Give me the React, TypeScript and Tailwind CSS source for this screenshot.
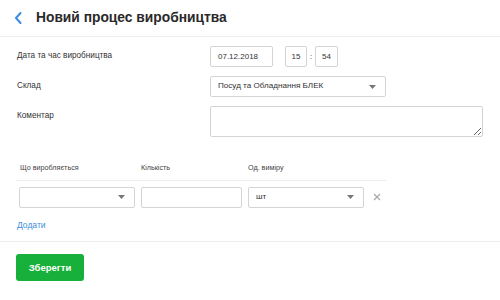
import React from 'react';

const font = { fontFamily: '"Liberation Sans", Arial, sans-serif' };

function Caret(): JSX.Element {
  return (
    <svg width="7" height="4" viewBox="0 0 7 4" className="shrink-0">
      <path d="M0 0h7L3.5 4z" fill="#777" />
    </svg>
  );
}

function SelectBox({ value, className }: { value?: string; className: string }): JSX.Element {
  return (
    <div
      className={`flex h-[21px] items-center justify-between rounded-[2px] border border-[#d4d4d4] bg-white pl-[7px] pr-[9px] text-[8.1px] text-[#333] ${className}`}
    >
      <span>{value ?? ''}</span>
      <Caret />
    </div>
  );
}

export default function App(): JSX.Element {
  return (
    <div className="h-[300px] w-[500px] overflow-hidden bg-white text-[#333]" style={font}>
      {/* Header */}
      <div className="flex h-[37px] items-center border-b border-[#ececec] pl-[14px]">
        <svg width="8" height="12" viewBox="0 0 8 12">
          <path d="M6.5 1L2 6l4.5 5" fill="none" stroke="#3b8de0" strokeWidth="2" strokeLinecap="round" strokeLinejoin="round" />
        </svg>
        <h1 className="ml-[14px] text-[13.8px] font-bold text-[#2a2a2a]">Новий процес виробництва</h1>
      </div>

      {/* Form rows */}
      <div className="flex flex-col gap-[9px] pl-[17px] pt-[9px]">
        <div className="flex">
          <div className="flex h-[21px] w-[193px] items-center text-[8.2px]">Дата та час виробництва</div>
          <div className="flex items-center">
            <div className="flex h-[21px] w-[63px] items-center rounded-[2px] border border-[#d4d4d4] px-[7px] text-[8px]">07.12.2018</div>
            <div className="ml-[12px] flex h-[21px] w-[22px] items-center justify-center rounded-[2px] border border-[#d4d4d4] text-[8px]">15</div>
            <span className="w-[8px] text-center text-[8px]">:</span>
            <div className="flex h-[21px] w-[23px] items-center justify-center rounded-[2px] border border-[#d4d4d4] text-[8px]">54</div>
          </div>
        </div>
        <div className="flex">
          <div className="flex h-[21px] w-[193px] items-center text-[8.2px]">Склад</div>
          <SelectBox value="Посуд та Обладнання БЛЕК" className="w-[176px]" />
        </div>
        <div className="flex">
          <div className="flex h-[21px] w-[193px] items-center text-[8.2px]">Коментар</div>
          <textarea className="h-[31px] w-[273px] rounded-[2px] border border-[#d4d4d4] outline-none" />
        </div>
      </div>

      {/* Items table */}
      <div className="ml-[16px] mt-[26px] w-[370px]">
        <div className="grid grid-cols-[122px_107px_122px_19px] border-b border-[#ececec] pb-[6px] text-[7.2px] text-[#444]">
          <div className="px-[4px]">Що виробляється</div>
          <div className="px-[3px]">Кількість</div>
          <div className="px-[3px]">Од. виміру</div>
          <div />
        </div>
        <div className="grid grid-cols-[122px_107px_122px_19px] items-center pt-[6px]">
          <div className="px-[3px]">
            <SelectBox className="w-[116px]" />
          </div>
          <div className="px-[3px]">
            <div className="h-[21px] w-[101px] rounded-[2px] border border-[#d4d4d4]" />
          </div>
          <div className="px-[3px]">
            <SelectBox value="шт" className="w-[116px]" />
          </div>
          <div className="flex justify-center">
            <svg width="8" height="8" viewBox="0 0 8 8">
              <path d="M1 1l6 6M7 1L1 7" stroke="#aaa" strokeWidth="1.3" />
            </svg>
          </div>
        </div>
      </div>

      <div className="pl-[17px] pt-[11px] text-[8.5px] text-[#3b8fd9]">Додати</div>

      {/* Footer */}
      <div className="mt-[9px] border-t border-[#ececec] pl-[16px] pt-[12px]">
        <button className="h-[27px] w-[68px] rounded-[3px] bg-[#16b03a] text-[9.5px] font-bold text-white">Зберегти</button>
      </div>
    </div>
  );
}
